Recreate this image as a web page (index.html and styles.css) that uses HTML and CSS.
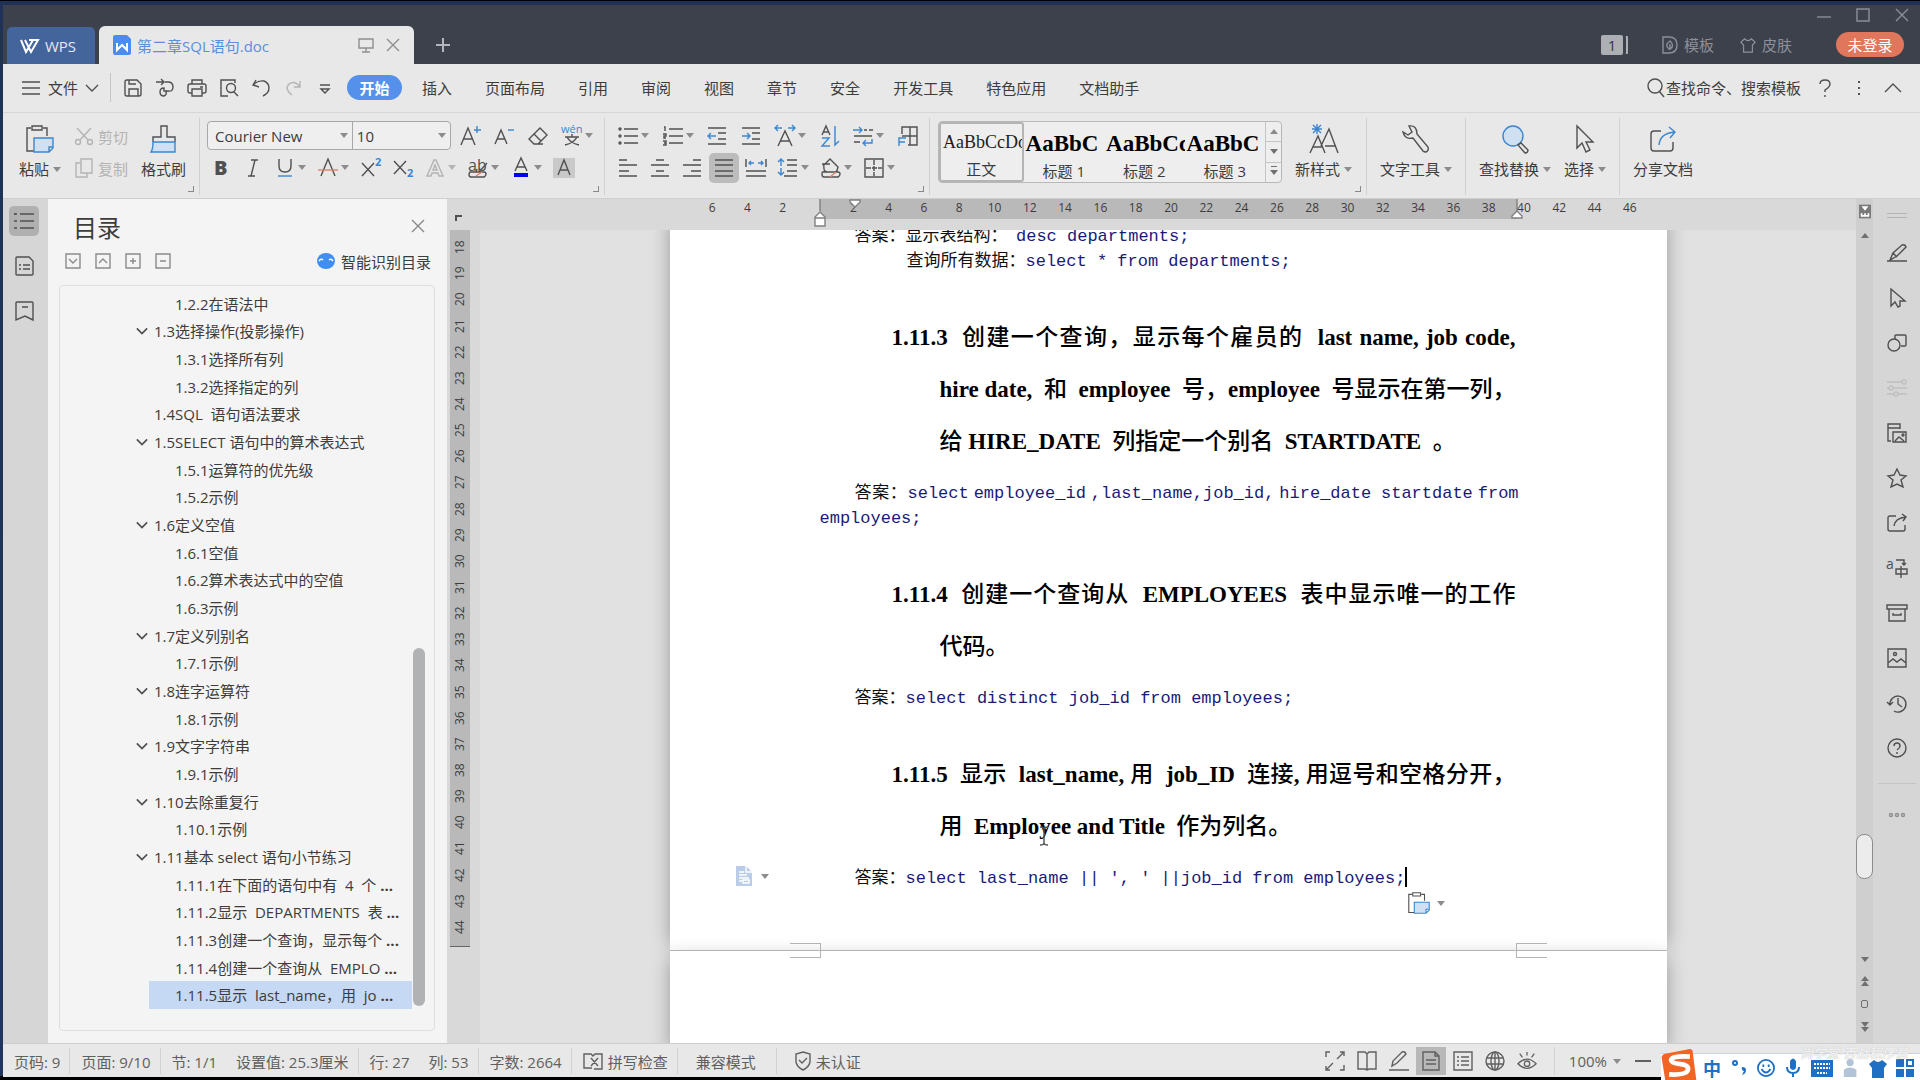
FILE: index.html
```html
<!DOCTYPE html>
<html lang="zh-CN">

<head>
  <meta charset="UTF-8">
  <meta name="viewport" content="width=device-width, initial-scale=1.0">
  <title>第二章SQL语句.doc</title>
  <link rel="stylesheet" href="styles.css">
</head>

<body>
  <!-- icon sprite -->
  <svg class="sprite" aria-hidden="true">
    <symbol id="i-close" viewBox="0 0 14 14"><path d="M1 1l12 12M13 1L1 13"/></symbol>
    <symbol id="i-down" viewBox="0 0 14 14"><path d="M1 4l6 6 6-6"/></symbol>
    <symbol id="i-up" viewBox="0 0 20 20"><path d="M2 14l8-8 8 8"/></symbol>
    <symbol id="i-menu" viewBox="0 0 20 20"><path d="M1 4h18M1 10h18M1 16h18"/></symbol>
    <symbol id="i-save" viewBox="0 0 20 20"><path d="M2 4q0-2 2-2h10l4 4v10q0 2-2 2H4q-2 0-2-2zM6 18v-7h9v7M6 2v4h7"/></symbol>
    <symbol id="i-export" viewBox="0 0 20 20"><path d="M1 4h8M6 1l3 3-3 3M10 4h3q5 0 5 5t-5 4H9v-3q-4 0-4 4t4 4q3-1 2-5"/></symbol>
    <symbol id="i-print" viewBox="0 0 20 20"><path d="M5 6V2h10v4M5 15H3q-2 0-2-2V8q0-2 2-2h14q2 0 2 2v5q0 2-2 2h-2M5 11h10v7H5zM13 9h3"/></symbol>
    <symbol id="i-preview" viewBox="0 0 20 20"><path d="M9 18H2V2h14v3"/><circle cx="12" cy="10" r="4.500"/><path d="M15 14l4 4"/></symbol>
    <symbol id="i-undo" viewBox="0 0 20 20"><path d="M5 2L2 7l6 2M2 7q5-5 11-4 5 2 5 7 0 5-6 8"/></symbol>
    <symbol id="i-redo" viewBox="0 0 20 20"><path d="M17 3v6h-6M17 9q-5-7-11-3-5 5 3 11"/></symbol>
    <symbol id="i-more" viewBox="0 0 20 20"><path d="M5 7h10M6 11l4 4 4-4z"/></symbol>
    <symbol id="i-search" viewBox="0 0 20 20"><circle cx="9" cy="8" r="7"/><path d="M13 13l5 6"/></symbol>
    <symbol id="i-dots" viewBox="0 0 20 20"><path d="M10 3v2M10 9v2M10 15v2"/></symbol>
    <symbol id="i-screen" viewBox="0 0 16 16"><path d="M1 2h14v9H1zM8 11v4M4 15h8"/></symbol>
    <symbol id="i-plus" viewBox="0 0 16 16"><path d="M8 1v14M1 8h14"/></symbol>
    <symbol id="i-leaf" viewBox="0 0 16 18"><path d="M1 1h6q8 0 8 8t-8 8H1zM7 13q-5-4 1-8 5 5 0 8zM8 8v6"/></symbol>
    <symbol id="i-shirt" viewBox="0 0 18 18"><path d="M5 2q4 4 8 0l4 4-3 3v8H4V9L1 6z"/></symbol>
    <symbol id="i-cut" viewBox="0 0 20 20"><path d="M3 2l11 12M17 2L6 14"/><circle cx="4" cy="16" r="2.500"/><circle cx="16" cy="16" r="2.500"/></symbol>
    <symbol id="i-copy" viewBox="0 0 20 20"><path d="M7 1h11v14H7zM7 5H2v14h11v-4"/></symbol>
    <symbol id="i-paste" viewBox="0 0 28 28"><path d="M5 3H1v23h7M17 3h4v8M6 1h10v4H6z"/><path class="blue fill" d="M8 13h19v10l-4 4H8zM27 22h-4v5"/></symbol>
    <symbol id="i-brush" viewBox="0 0 28 28"><path d="M3 17v-5h8V1h6v11h8v5"/><path class="blue fill" d="M3 17h22v10H1q2-3 2-10z"/></symbol>
    <symbol id="i-inc" viewBox="0 0 20 20"><path d="M1 19L8 2l7 17M4 13h8"/><path class="blue" d="M14 4h7M17 0v7"/></symbol>
    <symbol id="i-dec" viewBox="0 0 20 20"><path d="M1 18L7 4l6 14M3 13h8"/><path class="blue" d="M14 4h6"/></symbol>
    <symbol id="i-eraser" viewBox="0 0 20 20"><path d="M12 2l7 7-9 9H6l-5-5zM6 8l7 7M6 18h9"/></symbol>
    <symbol id="i-pinyin" viewBox="0 0 20 20"><text class="bt" x="-1" y="7" font-size="11">wén</text><path d="M3 11h14M10 8v3M5 11q3 6 12 8M15 11q-3 6-12 8"/></symbol>
    <symbol id="i-bold" viewBox="0 0 20 20"><text x="3" y="17" font-size="20" font-weight="800">B</text></symbol>
    <symbol id="i-italic" viewBox="0 0 20 20"><path d="M8 2h7M5 18h7M12 2L8 18"/></symbol>
    <symbol id="i-under" viewBox="0 0 20 20"><path d="M4 1v7q0 6 6 6t6-6V1"/><path class="blue" d="M3 18h14"/></symbol>
    <symbol id="i-strike" viewBox="0 0 20 20"><path d="M3 18l7-17 7 17"/><path class="red" d="M0 12h20"/></symbol>
    <symbol id="i-sup" viewBox="0 0 20 20"><path d="M1 5l12 13M13 5L1 18"/><text class="bt" x="14" y="8" font-size="11" font-weight="700">2</text></symbol>
    <symbol id="i-sub" viewBox="0 0 20 20"><path d="M1 3l12 13M13 3L1 16"/><text class="bt" x="14" y="19" font-size="11" font-weight="700">2</text></symbol>
    <symbol id="i-outline" viewBox="0 0 20 20"><path d="M2 18l7-16h2l7 16h-4l-1-3H7l-1 3zM8 12h4l-2-5z"/></symbol>
    <symbol id="i-mark" viewBox="0 0 20 20"><text x="0" y="13" font-size="16">ab</text><path d="M19 5l-8 9H8l1-3M2 14h14q2 0 2 2t-2 3H3q-2 0-2-3z"/><path class="red" d="M8 18l6-4"/></symbol>
    <symbol id="i-color" viewBox="0 0 20 20"><path d="M4 13L10 0l6 13M6 9h8"/><path class="ink" d="M3 17h14"/></symbol>
    <symbol id="i-shade" viewBox="0 0 20 20"><path class="shade" d="M-1 0h22v20H-1z"/><path d="M4 17l6-15 6 15M6 12h8"/></symbol>
    <symbol id="i-bullets" viewBox="0 0 20 20"><path d="M6 3h14M6 10h14M6 17h14"/><circle cx="2" cy="3" r="1"/><circle cx="2" cy="10" r="1"/><circle cx="2" cy="17" r="1"/></symbol>
    <symbol id="i-numbers" viewBox="0 0 20 20"><path d="M6 3h14M6 10h14M6 17h14M1 1h1v4M0 8h3v2H1v2h2M0 15h3v4H0M1 17h2"/></symbol>
    <symbol id="i-outdent" viewBox="0 0 20 20"><path d="M1 2h18M11 7h8M11 13h8M1 18h18"/><path class="blue" d="M1 10h8M4 7l-3 3 3 3"/></symbol>
    <symbol id="i-indent" viewBox="0 0 20 20"><path d="M1 2h18M11 7h8M11 13h8M1 18h18"/><path class="blue" d="M1 10h8M6 7l3 3-3 3"/></symbol>
    <symbol id="i-scale" viewBox="0 0 20 20"><path d="M3 20L10 5l7 15M5 15h10"/><path class="blue" d="M0 2h7M3-1L0 2l3 3M13 2h7M17-1l3 3-3 3"/></symbol>
    <symbol id="i-sort" viewBox="0 0 20 20"><path d="M2 9l4-9 4 9M3 6h6"/><path class="blue" d="M2 12h7l-7 8h8M15 0v19l4-4"/></symbol>
    <symbol id="i-marks" viewBox="0 0 20 20"><path d="M11 4h3M16 4h4M1 10h18M1 16h6"/><path class="blue" d="M0 4h9M6 1l3 3-3 3M19 13v4h-9M13 14l-3 3 3 3"/></symbol>
    <symbol id="i-tabs" viewBox="0 0 20 20"><path d="M4 8V1h15v18h-9M12 1v18M4 10h15"/><path class="blue" d="M1 20v-8h7M1 16h6"/></symbol>
    <symbol id="i-left" viewBox="0 0 20 20"><path d="M1 2h8M1 7h18M1 13h10M1 18h18"/></symbol>
    <symbol id="i-center" viewBox="0 0 20 20"><path d="M6 2h8M1 7h18M6 13h8M1 18h18"/></symbol>
    <symbol id="i-right" viewBox="0 0 20 20"><path d="M11 2h8M1 7h18M9 13h10M1 18h18"/></symbol>
    <symbol id="i-justify" viewBox="0 0 20 20"><path d="M1 2h18M1 7h18M1 13h18M1 18h18"/></symbol>
    <symbol id="i-spread" viewBox="0 0 20 20"><path d="M0 1v8M20 1v8M0 13h20M0 18h20"/><path class="blue" d="M3 5h5M5 3L3 5l2 2M12 5h5M15 3l2 2-2 2"/></symbol>
    <symbol id="i-lines" viewBox="0 0 20 20"><path d="M9 2h10M9 7h10M9 13h10M6 18h13"/><path class="blue" d="M3 1v7M0 4l3-3 3 3M3 10v7M0 14l3 3 3-3"/></symbol>
    <symbol id="i-fill" viewBox="0 0 20 20"><path d="M2 8l7-7 8 8q-1 5-3 5H6Q2 13 3 8M1 6h8M3 14h14q2 0 2 2t-2 3H3q-2 0-2-3t2-2z"/><path class="red" d="M9 19l6-5"/></symbol>
    <symbol id="i-border" viewBox="0 0 20 20"><path d="M1 1h18v18H1z"/><path d="M10 2v16M2 10h16" stroke-dasharray="5 1"/></symbol>
    <symbol id="i-style" viewBox="0 0 30 30"><path d="M1 29l8-17 7 17M4 23h9M12 22L20 5l9 24M16 22h11"/><path class="blue" d="M8 0v10M3 5h10M4 1l8 8M12 1L4 9"/></symbol>
    <symbol id="i-wrench" viewBox="0 0 28 28"><path d="M7 1q8-1 8 8l11 13q1 4-2 5-2 0-3-1L11 13Q3 15 1 7l5 3 4-3z"/></symbol>
    <symbol id="i-find" viewBox="0 0 28 28"><circle class="blue fill" cx="12" cy="11" r="10"/><path d="M17 20l3-2 7 7q0 3-3 3z"/></symbol>
    <symbol id="i-pick" viewBox="0 0 28 28"><path d="M6 1v22l5-5 4 9 4-2-4-8h7z"/></symbol>
    <symbol id="i-share" viewBox="0 0 28 28"><path d="M12 6H5q-3 0-3 3v14q0 3 3 3h16q3 0 3-3v-6"/><path class="blue" d="M10 20q1-12 16-13M20 2l6 5-5 6"/></symbol>
    <symbol id="i-toc" viewBox="0 0 20 20"><path d="M6 3h14M6 10h14M6 17h14M0 3h3M1 2v2M0 10h3M0 17h3"/></symbol>
    <symbol id="i-page" viewBox="0 0 20 20"><path d="M2 2q0-1 1-1h12l4 4v13q0 1-1 1H3q-1 0-1-1zM5 9h2M9 9h7M5 13h2M9 13h7"/></symbol>
    <symbol id="i-mark2" viewBox="0 0 20 20"><path d="M2 2q0-1 1-1h15q1 0 1 1v17l-8-4-9 4zM8 6h6"/></symbol>
    <symbol id="i-boxdown" viewBox="0 0 16 16"><path d="M1 1h14v14H1zM4 6l4 4 4-4"/></symbol>
    <symbol id="i-boxup" viewBox="0 0 16 16"><path d="M1 1h14v14H1zM4 10l4-4 4 4"/></symbol>
    <symbol id="i-boxplus" viewBox="0 0 16 16"><path d="M1 1h14v14H1zM5 8h6M8 5v6"/></symbol>
    <symbol id="i-boxminus" viewBox="0 0 16 16"><path d="M1 1h14v14H1zM5 8h6"/></symbol>
    <symbol id="i-pen" viewBox="0 0 20 20"><path d="M0 18h20M3 17l3-7 9-8q3-1 4 2l-9 9zM6 10l4 4"/></symbol>
    <symbol id="i-cursor" viewBox="0 0 20 20"><path d="M4 1v17l4-4 3 5 2-1v-5h5z"/></symbol>
    <symbol id="i-shapes" viewBox="0 0 20 20"><path d="M8 6V3q0-1 1-1h9q1 0 1 1v9q0 1-1 1h-4"/><circle cx="7" cy="12" r="6"/></symbol>
    <symbol id="i-sliders" viewBox="0 0 20 20"><path d="M0 4h15M0 10h2M6 10h14M0 16h7M11 16h9"/><circle cx="17" cy="4" r="2"/><circle cx="4" cy="10" r="2"/><circle cx="9" cy="16" r="2"/></symbol>
    <symbol id="i-gallery" viewBox="0 0 20 20"><path d="M4 18H1V1h12v5M1 5h12M6 9h13v10H6zM8 18l4-4 5 4"/><circle cx="16" cy="12" r="1"/></symbol>
    <symbol id="i-star" viewBox="0 0 20 20"><path d="M10 1l3 6 6 1-5 4 2 7-6-3-6 3 2-7-5-4 6-1z"/></symbol>
    <symbol id="i-send" viewBox="0 0 20 20"><path d="M9 3H3q-2 0-2 2v11q0 2 2 2h13q2 0 2-2v-4M7 13q1-8 12-9M15 1l4 3-3 4"/></symbol>
    <symbol id="i-trans" viewBox="0 0 20 20"><text x="-1" y="11" font-size="14">a</text><path d="M9 2h8v4M15 5l2 2 2-2M9 11h11v5H9zM14 8v12"/></symbol>
    <symbol id="i-archive" viewBox="0 0 20 20"><path d="M0 2h20v4H0zM2 6v12h16V6M6 10v2h8v-2"/></symbol>
    <symbol id="i-image" viewBox="0 0 20 20"><path d="M1 1h18v18H1zM1 15l5-4 4 3 4-3 5 4"/><circle cx="8" cy="6" r="1.500"/></symbol>
    <symbol id="i-history" viewBox="0 0 20 20"><path d="M3 12a8 8 0 1 1 4 6M0 9l3 3 3-3M11 5v6l4 3"/></symbol>
    <symbol id="i-help" viewBox="0 0 20 20"><circle cx="10" cy="10" r="9"/><path d="M7 8q0-3 3-3t3 3q0 2-3 4M10 14v2"/></symbol>
    <symbol id="i-ask" viewBox="0 0 20 20"><path d="M5 6q0-4 5-4t5 4q0 3-5 6v2M10 17v2"/></symbol>
    <symbol id="i-ellipsis" viewBox="0 0 20 20"><circle cx="4" cy="10" r="1.500"/><circle cx="10" cy="10" r="1.500"/><circle cx="16" cy="10" r="1.500"/></symbol>
    <symbol id="i-spell" viewBox="0 0 20 20"><path d="M9 17H1V3h7l2 2 2-2h7v15h-8M8 7l7 8M15 7l-7 8"/></symbol>
    <symbol id="i-shield" viewBox="0 0 16 20"><path d="M8 1l7 2v8q-1 5-7 8-6-3-7-8V3zM4 9l3 3 5-5"/></symbol>
    <symbol id="i-full" viewBox="0 0 20 20"><path d="M1 6V1h4M15 1h4v4M19 14v5h-4M5 19H1v-4M12 8l6-6M8 12l-6 6"/></symbol>
    <symbol id="i-book" viewBox="0 0 20 20"><path d="M10 3L8 1H1v17h7l2 1 2-1h7V1h-7zM10 3v16"/></symbol>
    <symbol id="i-write" viewBox="0 0 20 20"><path d="M0 19h20M3 15l1-5 9-9q3-1 4 2l-9 9z"/></symbol>
    <symbol id="i-doc" viewBox="0 0 20 20"><path d="M2 1h12l4 4v14H2zM5 9h10M5 13h10M14 1v4h4"/></symbol>
    <symbol id="i-list" viewBox="0 0 20 20"><path d="M1 1h18v18H1zM4 6h2M8 6h8M4 10h2M8 10h8M4 14h2M8 14h8"/></symbol>
    <symbol id="i-globe" viewBox="0 0 20 20"><circle cx="10" cy="10" r="9"/><ellipse cx="10" cy="10" rx="4" ry="9"/><path d="M10 1v18M2 7h16M2 13h16"/></symbol>
    <symbol id="i-eye" viewBox="0 0 22 20"><path d="M1 13q10-10 20 0-10 10-20 0zM11 0v4M3 2l3 4M19 2l-3 4"/><circle cx="11" cy="13" r="3"/></symbol>
  </svg>

  <div class="window">
    <header class="titlebar">
      <button class="tab-home"><svg viewBox="0 0 20 16"><path d="M1 2l5 12L13 2M5 2l6 12 7-12H9"/></svg>WPS</button>
      <div class="tab-doc">
        <svg class="doc-logo" viewBox="0 0 18 20"><path class="logo-bg" d="M2 0h12l4 4v14q0 2-2 2H2q-2 0-2-2V2q0-2 2-2z"/><path class="logo-w" d="M4 8v7l5-5 5 5V8"/></svg>
        <span class="tab-name">第二章SQL语句.doc</span>
        <svg class="s16"><use href="#i-screen"/></svg>
        <button aria-label="关闭标签"><svg class="s14"><use href="#i-close"/></svg></button>
      </div>
      <button class="tab-new" aria-label="新建"><svg class="s16"><use href="#i-plus"/></svg></button>
      <div class="title-right">
        <div class="win-buttons">
          <button aria-label="最小化"><svg class="s14" viewBox="0 0 14 14"><path d="M0 9h14"/></svg></button>
          <button aria-label="最大化"><svg class="s14" viewBox="0 0 14 14"><path d="M1 1h12v12H1z"/></svg></button>
          <button aria-label="关闭"><svg class="s14"><use href="#i-close"/></svg></button>
        </div>
        <div class="account">
          <span class="badge">1</span>
          <a href="#"><svg viewBox="0 0 16 18"><use href="#i-leaf"/></svg>模板</a>
          <a href="#"><svg viewBox="0 0 18 18"><use href="#i-shirt"/></svg>皮肤</a>
          <button class="login">未登录</button>
        </div>
      </div>
    </header>

    <nav class="menubar">
      <button class="file"><svg class="s20"><use href="#i-menu"/></svg>文件<svg class="s14"><use href="#i-down"/></svg></button>
      <div class="quick">
        <button aria-label="保存"><svg class="s20"><use href="#i-save"/></svg></button>
        <button aria-label="输出"><svg class="s20"><use href="#i-export"/></svg></button>
        <button aria-label="打印"><svg class="s20"><use href="#i-print"/></svg></button>
        <button aria-label="打印预览"><svg class="s20"><use href="#i-preview"/></svg></button>
        <button aria-label="撤销"><svg class="s20"><use href="#i-undo"/></svg></button>
        <button aria-label="恢复" class="off"><svg class="s20"><use href="#i-redo"/></svg></button>
        <button aria-label="更多"><svg class="s20"><use href="#i-more"/></svg></button>
      </div>
      <div class="menus">
        <button class="active">开始</button>
        <button>插入</button>
        <button>页面布局</button>
        <button>引用</button>
        <button>审阅</button>
        <button>视图</button>
        <button>章节</button>
        <button>安全</button>
        <button>开发工具</button>
        <button>特色应用</button>
        <button>文档助手</button>
      </div>
      <div class="menu-right">
        <button class="find"><svg class="s20"><use href="#i-search"/></svg>查找命令、搜索模板</button>
        <button aria-label="帮助"><svg class="s20"><use href="#i-ask"/></svg></button>
        <button aria-label="选项"><svg class="s20 bolder"><use href="#i-dots"/></svg></button>
        <button aria-label="折叠"><svg class="s20"><use href="#i-up"/></svg></button>
      </div>
    </nav>

    <div class="ribbon">
      <section class="group clipboard">
        <button class="big"><svg class="s28"><use href="#i-paste"/></svg><span>粘贴<i class="caret"></i></span></button>
        <div class="rows">
          <button class="off"><svg class="s20"><use href="#i-cut"/></svg>剪切</button>
          <button class="off"><svg class="s20"><use href="#i-copy"/></svg>复制</button>
        </div>
        <button class="big"><svg class="s28"><use href="#i-brush"/></svg><span>格式刷</span></button>
        <i class="corner"></i>
      </section>

      <section class="group font">
        <div class="row top">
          <div class="combos">
            <label class="combo name"><select aria-label="字体"><option>Courier New</option></select><i class="caret"></i></label>
            <label class="combo size"><select aria-label="字号"><option>10</option></select><i class="caret"></i></label>
          </div>
          <button aria-label="增大字号"><svg class="s20"><use href="#i-inc"/></svg></button>
          <button aria-label="减小字号"><svg class="s20"><use href="#i-dec"/></svg></button>
          <button aria-label="清除格式"><svg class="s20"><use href="#i-eraser"/></svg></button>
          <button aria-label="拼音指南"><svg class="s20"><use href="#i-pinyin"/></svg><i class="caret"></i></button>
        </div>
        <div class="row bottom">
          <button aria-label="加粗"><svg class="s20"><use href="#i-bold"/></svg></button>
          <button aria-label="倾斜"><svg class="s20"><use href="#i-italic"/></svg></button>
          <button aria-label="下划线"><svg class="s20"><use href="#i-under"/></svg><i class="caret"></i></button>
          <button aria-label="删除线"><svg class="s20"><use href="#i-strike"/></svg><i class="caret"></i></button>
          <button aria-label="上标"><svg class="s20"><use href="#i-sup"/></svg></button>
          <button aria-label="下标"><svg class="s20"><use href="#i-sub"/></svg></button>
          <button aria-label="文字效果" class="off"><svg class="s20"><use href="#i-outline"/></svg><i class="caret"></i></button>
          <button aria-label="突出显示"><svg class="s20"><use href="#i-mark"/></svg><i class="caret"></i></button>
          <button aria-label="字体颜色"><svg class="s20"><use href="#i-color"/></svg><i class="caret"></i></button>
          <button aria-label="字符底纹"><svg class="s20"><use href="#i-shade"/></svg></button>
        </div>
        <i class="corner"></i>
      </section>

      <section class="group para">
        <div class="row spread">
          <button aria-label="项目符号"><svg class="s20"><use href="#i-bullets"/></svg><i class="caret"></i></button>
          <button aria-label="编号"><svg class="s20"><use href="#i-numbers"/></svg><i class="caret"></i></button>
          <button aria-label="减少缩进"><svg class="s20"><use href="#i-outdent"/></svg></button>
          <button aria-label="增加缩进"><svg class="s20"><use href="#i-indent"/></svg></button>
          <button aria-label="中文版式"><svg class="s20"><use href="#i-scale"/></svg><i class="caret"></i></button>
          <button aria-label="排序"><svg class="s20"><use href="#i-sort"/></svg></button>
          <button aria-label="编辑标记"><svg class="s20"><use href="#i-marks"/></svg><i class="caret"></i></button>
          <button aria-label="制表位"><svg class="s20"><use href="#i-tabs"/></svg></button>
        </div>
        <div class="row bottom">
          <button aria-label="左对齐"><svg class="s20"><use href="#i-left"/></svg></button>
          <button aria-label="居中"><svg class="s20"><use href="#i-center"/></svg></button>
          <button aria-label="右对齐"><svg class="s20"><use href="#i-right"/></svg></button>
          <button aria-label="两端对齐" class="on"><svg class="s20"><use href="#i-justify"/></svg></button>
          <button aria-label="分散对齐"><svg class="s20"><use href="#i-spread"/></svg></button>
          <button aria-label="行距"><svg class="s20"><use href="#i-lines"/></svg><i class="caret"></i></button>
          <button aria-label="底纹颜色"><svg class="s20"><use href="#i-fill"/></svg><i class="caret"></i></button>
          <button aria-label="边框"><svg class="s20"><use href="#i-border"/></svg><i class="caret"></i></button>
        </div>
        <i class="corner"></i>
      </section>

      <section class="group styles">
        <div class="gallery">
          <button class="style current"><span class="sample">AaBbCcDd</span><span>正文</span></button>
          <button class="style"><span class="sample head">AaBbC</span><span>标题 1</span></button>
          <button class="style"><span class="sample head">AaBbCc</span><span>标题 2</span></button>
          <button class="style"><span class="sample head">AaBbC</span><span>标题 3</span></button>
          <div class="scroller">
            <button aria-label="上一行"><i class="caret flip"></i></button>
            <button aria-label="下一行"><i class="caret dark"></i></button>
            <button aria-label="展开"><i class="caret dark bar"></i></button>
          </div>
        </div>
        <button class="big"><svg class="s30"><use href="#i-style"/></svg><span>新样式<i class="caret"></i></span></button>
        <i class="corner"></i>
      </section>

      <section class="group">
        <button class="big"><svg class="s28"><use href="#i-wrench"/></svg><span>文字工具<i class="caret"></i></span></button>
      </section>
      <section class="group">
        <button class="big"><svg class="s28"><use href="#i-find"/></svg><span>查找替换<i class="caret"></i></span></button>
        <button class="big"><svg class="s28"><use href="#i-pick"/></svg><span>选择<i class="caret"></i></span></button>
      </section>
      <section class="group last">
        <button class="big"><svg class="s28"><use href="#i-share"/></svg><span>分享文档</span></button>
      </section>
    </div>

    <main class="workspace">
      <aside class="rail left">
        <button class="on" aria-label="目录"><svg class="s20"><use href="#i-toc"/></svg></button>
        <button aria-label="章节"><svg class="s20"><use href="#i-page"/></svg></button>
        <button aria-label="书签"><svg class="s20"><use href="#i-mark2"/></svg></button>
      </aside>

      <aside class="outline">
        <div class="outline-head">
          <h2>目录</h2>
          <button aria-label="关闭目录"><svg class="s14"><use href="#i-close"/></svg></button>
        </div>
        <div class="outline-tools">
          <button aria-label="展开"><svg class="s16"><use href="#i-boxdown"/></svg></button>
          <button aria-label="收起"><svg class="s16"><use href="#i-boxup"/></svg></button>
          <button aria-label="增加级别"><svg class="s16"><use href="#i-boxplus"/></svg></button>
          <button aria-label="减少级别"><svg class="s16"><use href="#i-boxminus"/></svg></button>
          <button class="smart"><svg viewBox="0 0 18 16"><ellipse cx="9" cy="8" rx="9" ry="8"/><path d="M2 8q2-3 4-1M12 7q2-2 4 1"/></svg>智能识别目录</button>
        </div>
        <div class="tree">
          <ul>
            <li class="sub"><a href="#">1.2.2在语法中</a></li>
            <li><svg class="s14"><use href="#i-down"/></svg><a href="#">1.3选择操作(投影操作)</a></li>
            <li class="sub"><a href="#">1.3.1选择所有列</a></li>
            <li class="sub"><a href="#">1.3.2选择指定的列</a></li>
            <li class="leaf"><a href="#">1.4SQL&nbsp; 语句语法要求</a></li>
            <li><svg class="s14"><use href="#i-down"/></svg><a href="#">1.5SELECT 语句中的算术表达式</a></li>
            <li class="sub"><a href="#">1.5.1运算符的优先级</a></li>
            <li class="sub"><a href="#">1.5.2示例</a></li>
            <li><svg class="s14"><use href="#i-down"/></svg><a href="#">1.6定义空值</a></li>
            <li class="sub"><a href="#">1.6.1空值</a></li>
            <li class="sub"><a href="#">1.6.2算术表达式中的空值</a></li>
            <li class="sub"><a href="#">1.6.3示例</a></li>
            <li><svg class="s14"><use href="#i-down"/></svg><a href="#">1.7定义列别名</a></li>
            <li class="sub"><a href="#">1.7.1示例</a></li>
            <li><svg class="s14"><use href="#i-down"/></svg><a href="#">1.8连字运算符</a></li>
            <li class="sub"><a href="#">1.8.1示例</a></li>
            <li><svg class="s14"><use href="#i-down"/></svg><a href="#">1.9文字字符串</a></li>
            <li class="sub"><a href="#">1.9.1示例</a></li>
            <li><svg class="s14"><use href="#i-down"/></svg><a href="#">1.10去除重复行</a></li>
            <li class="sub"><a href="#">1.10.1示例</a></li>
            <li><svg class="s14"><use href="#i-down"/></svg><a href="#">1.11基本 select 语句小节练习</a></li>
            <li class="sub"><a href="#">1.11.1在下面的语句中有&nbsp; 4&nbsp; 个 <b>...</b></a></li>
            <li class="sub"><a href="#">1.11.2显示&nbsp; DEPARTMENTS&nbsp; 表 <b>...</b></a></li>
            <li class="sub"><a href="#">1.11.3创建一个查询，显示每个 <b>...</b></a></li>
            <li class="sub"><a href="#">1.11.4创建一个查询从&nbsp; EMPLO <b>...</b></a></li>
            <li class="sub here"><a href="#">1.11.5显示&nbsp; last_name，用&nbsp; jo <b>...</b></a></li>
          </ul>
          <div class="tree-scroll"><i></i></div>
        </div>
      </aside>

      <div class="vruler">
        <svg class="s14" viewBox="0 0 14 14"><path d="M4 10V5h6"/></svg>
        <div class="vruler-scale">
          <span>44</span><span>43</span><span>42</span><span>41</span><span>40</span><span>39</span><span>38</span><span>37</span><span>36</span><span>35</span><span>34</span><span>33</span><span>32</span><span>31</span><span>30</span><span>29</span><span>28</span><span>27</span><span>26</span><span>25</span><span>24</span><span>23</span><span>22</span><span>21</span><span>20</span><span>19</span><span>18</span>
        </div>
      </div>

      <div class="editor">
        <div class="hruler">
          <div class="hruler-scale">
            <span>6</span><span>4</span><span>2</span><span></span><span>2</span><span>4</span><span>6</span><span>8</span><span>10</span><span>12</span><span>14</span><span>16</span><span>18</span><span>20</span><span>22</span><span>24</span><span>26</span><span>28</span><span>30</span><span>32</span><span>34</span><span>36</span><span>38</span><span>40</span><span>42</span><span>44</span><span>46</span>
            <svg class="stop hang" viewBox="0 0 12 28"><path class="line" d="M6 0v12"/><path d="M1 18l5-5 5 5v9H1zM1 19h10"/></svg>
            <svg class="stop first" viewBox="0 0 12 28"><path d="M1 1h10v2L6 8 1 3z"/></svg>
            <svg class="stop end" viewBox="0 0 12 28"><path class="line" d="M6 0v12"/><path d="M1 19v-2l5-5 5 5v2z"/></svg>
          </div>
        </div>
        <div class="canvas">
          <article class="page">
            <p>答案：显示表结构：&nbsp; <code>desc departments;</code></p>
            <p class="deep">查询所有数据：<code>select * from departments;</code></p>

            <h3><b>1.11.3&nbsp; </b>创建一个查询，显示每个雇员的<b>&nbsp; last name, job code, hire date,&nbsp; </b>和<b>&nbsp; employee&nbsp; </b>号，<b>employee&nbsp; </b>号显示在第一列，给<b> HIRE_DATE&nbsp; </b>列指定一个别名<b>&nbsp; STARTDATE&nbsp; </b>。</h3>
            <p>答案：<code>select</code> <code>employee_id</code> <code>,last_name,job_id,</code> <code>hire_date</code>&nbsp; <code>startdate</code> <code>from</code> <code>employees;</code></p>

            <h3><b>1.11.4&nbsp; </b>创建一个查询从<b>&nbsp; EMPLOYEES&nbsp; </b>表中显示唯一的工作代码。</h3>
            <p>答案：<code>select distinct job_id from employees;</code></p>

            <h3><b>1.11.5&nbsp; </b>显示<b>&nbsp; last_name, </b>用<b>&nbsp; job_ID&nbsp; </b>连接<b>, </b>用逗号和空格分开，用<b>&nbsp; Employee and Title&nbsp; </b>作为列名。</h3>
            <p class="typing">答案：<code>select last_name || ', ' ||job_id from employees;</code><span class="cursor"><button class="paste-tip" aria-label="粘贴选项"><svg class="s22" viewBox="0 0 28 28"><use href="#i-paste"/></svg><i class="caret"></i></button></span>
              <button class="para-tip" aria-label="段落布局"><svg viewBox="0 0 16 20"><path class="tip-bg" d="M0 0h10l6 6v14H0z"/><path d="M10 0v6h6M3 6h5M3 9h8M3 12h10M3 15h4v-1h6v3H7v-1"/></svg><i class="caret"></i></button>
            </p>
            <svg class="ibeam" viewBox="0 0 10 20"><path d="M1 1q4 0 4 2 0-2 4-2M5 3v14M1 19q4 0 4-2 0 2 4 2"/></svg>
          </article>
          <div class="page next"><i class="crop l"></i><i class="crop r"></i></div>
        </div>
      </div>

      <div class="vscroll">
        <svg class="ruler-toggle" viewBox="0 0 14 16"><path class="box" d="M0 0h14v16H0z"/><path class="tri" d="M3 2h8L7 7zM2 10h2v2h2v-2h2v2h2v-2h2v4H2z"/></svg>
        <i class="caret flip dark"></i>
        <i class="thumb"></i>
        <i class="caret dark"></i>
        <span><i class="caret flip dark"></i><i class="caret flip dark"></i></span>
        <i class="ring"></i>
        <span><i class="caret dark"></i><i class="caret dark"></i></span>
      </div>

      <aside class="rail right">
        <i class="grip"></i>
        <button aria-label="画笔"><svg class="s20"><use href="#i-pen"/></svg></button>
        <button aria-label="选择"><svg class="s20"><use href="#i-cursor"/></svg></button>
        <button aria-label="形状"><svg class="s20"><use href="#i-shapes"/></svg></button>
        <button aria-label="属性" class="off"><svg class="s20"><use href="#i-sliders"/></svg></button>
        <button aria-label="图库"><svg class="s20"><use href="#i-gallery"/></svg></button>
        <button aria-label="收藏"><svg class="s20"><use href="#i-star"/></svg></button>
        <button aria-label="分享"><svg class="s20"><use href="#i-send"/></svg></button>
        <button aria-label="翻译"><svg class="s20"><use href="#i-trans"/></svg></button>
        <button aria-label="备份"><svg class="s20"><use href="#i-archive"/></svg></button>
        <button aria-label="图片"><svg class="s20"><use href="#i-image"/></svg></button>
        <button aria-label="历史"><svg class="s20"><use href="#i-history"/></svg></button>
        <button aria-label="帮助"><svg class="s20"><use href="#i-help"/></svg></button>
        <hr>
        <button aria-label="更多" class="soft"><svg class="s20"><use href="#i-ellipsis"/></svg></button>
      </aside>
    </main>

    <footer class="status">
      <span>页码: 9</span>
      <span>页面: 9/10</span>
      <span>节: 1/1<em>设置值: 25.3厘米</em></span>
      <span>行: 27<em>列: 53</em></span>
      <span>字数: 2664</span>
      <button><svg class="s20"><use href="#i-spell"/></svg>拼写检查</button>
      <span class="wide">兼容模式</span>
      <button class="wide"><svg class="shield" viewBox="0 0 16 20"><use href="#i-shield"/></svg>未认证</button>
      <div class="views">
        <button aria-label="全屏"><svg class="s20"><use href="#i-full"/></svg></button>
        <button aria-label="阅读"><svg class="s20"><use href="#i-book"/></svg></button>
        <button aria-label="写作"><svg class="s20"><use href="#i-write"/></svg></button>
        <button aria-label="页面视图" class="on"><svg class="s20"><use href="#i-doc"/></svg></button>
        <button aria-label="大纲"><svg class="s20"><use href="#i-list"/></svg></button>
        <button aria-label="网页"><svg class="s20"><use href="#i-globe"/></svg></button>
        <button aria-label="护眼"><svg class="s20"><use href="#i-eye"/></svg></button>
      </div>
      <div class="zoom">
        <button>100%<i class="caret"></i></button>
        <button aria-label="缩小"><svg class="s16 bolder" viewBox="0 0 16 16"><path d="M0 8h16"/></svg></button>
      </div>
    </footer>
  </div>

  <!-- floating input method bar -->
  <div class="ime">
    <svg class="ime-logo" viewBox="0 0 38 34"><path class="o" d="M4 5l26-5q3 0 3 3l4 31H4L0 9q0-3 4-4z"/><path class="s" d="M30 8q-20-1-20 4 0 3 10 4 9 1 8 6-1 6-20 5"/></svg>
    <span class="zh">中</span>
    <svg viewBox="0 0 16 20"><circle class="thin" cx="4" cy="5" r="2"/><path class="solid" d="M11 9q4 0 4 3 0 4-4 5l2-4q-3-1-2-4z"/></svg>
    <svg viewBox="0 0 20 20"><circle cx="10" cy="10" r="9"/><path d="M5 11q5 8 10 0M7 6v3M13 6v3"/></svg>
    <svg viewBox="0 0 16 20"><path class="solid" d="M5 3q3-5 6 0v7q-3 4-6 0z"/><path d="M2 9q0 6 6 6t6-6M8 15v4"/></svg>
    <svg class="w22" viewBox="0 0 22 18"><path class="solid" d="M0 1h22v17H0z"/><path class="keys" d="M3 5h16M3 9h16M6 14h10" stroke-dasharray="2 1"/></svg>
    <svg class="pale" viewBox="0 0 20 20"><circle class="solid" cx="9" cy="4" r="4"/><path class="solid" d="M2 20v-8q7-5 14 0v8z"/></svg>
    <svg viewBox="0 0 18 20"><path class="solid" d="M5 2q4 4 8 0l5 4-3 4v10H3V10L0 6z"/></svg>
    <svg viewBox="0 0 18 20"><path class="solid" d="M0 1h8v8H0zM0 11h8v8H0zM10 11h8v8h-8z"/><path d="M11 2h6v6h-6z"/></svg>
    <span class="watermark">尚学堂·百战程序员</span>
  </div>
</body>

</html>
```
FILE: styles.css
```css
* {
  margin: 0;
  padding: 0;
  box-sizing: border-box;
}

body {
  height: 100vh;
  padding: 4px 0 3px 3px;
  border-top: 1px solid black;
  background: linear-gradient(#1f3157 0, #22355c 1076px, black 1076px);
  color: #3c3c3c;
  font-family: "Open Sans", "Noto Sans CJK SC", sans-serif;
  font-size: 15px;
  overflow: hidden;
}

.sprite {
  display: none;
}

button, select {
  border: none;
  background: none;
  color: inherit;
  font: inherit;
}

button {
  display: flex;
  align-items: center;
  justify-content: center;
  white-space: nowrap;
}

a {
  color: inherit;
  text-decoration: none;
}

svg {
  flex: none;
  fill: none;
  stroke: #505050;
  stroke-width: 1.4;
  overflow: visible;
}

symbol {
  overflow: visible;
}

svg text {
  fill: #505050;
  stroke: none;
  font-family: "Open Sans", sans-serif;
}

svg .blue { stroke: #3c86d0; }
svg .red { stroke: #e0826c; }
svg .fill { fill: #cfe0f2; }
svg .bt { fill: #3c86d0; }
svg .ink { stroke: #0000f0; stroke-width: 4; }
svg .shade { fill: #c9c9c9; stroke: none; }

.s14 { width: 14px; height: 14px; }
.s16 { width: 16px; height: 16px; }
.s20 { width: 20px; height: 20px; }
.s22 { width: 22px; height: 22px; }
.s28 { width: 28px; height: 28px; }
.s30 { width: 30px; height: 30px; }
.bolder { stroke-width: 2; }

.off {
  color: #b4b4b4;
}

.off svg {
  stroke: #b4b4b4;
}

.soft svg {
  stroke: #909090;
}

.caret {
  flex: none;
  border: 4px solid transparent;
  border-top: 5px solid #8c8c8c;
  border-bottom: none;
}

.off .caret { border-top-color: #b4b4b4; }
.caret.dark { border-top-color: #707070; }
.caret.flip { transform: rotate(180deg); }

.window {
  display: grid;
  grid-template-rows: 59px 49px 86px 1fr 34px;
  height: 100%;
}

/* title bar */
.titlebar {
  display: flex;
  align-items: flex-end;
  background: #3d414c;
  padding-left: 4px;
  min-width: 0;
}

.tab-home {
  width: 88px;
  height: 37px;
  margin-right: 4px;
  gap: 5px;
  padding-right: 6px;
  background: #43659c;
  border-radius: 5px 5px 0 0;
  color: #e4e8f0;
}

.tab-home svg {
  width: 20px;
  height: 16px;
  stroke: white;
  stroke-width: 2;
}

.tab-doc {
  display: flex;
  align-items: center;
  width: 315px;
  height: 38px;
  padding: 0 14px;
  background: #e8e8e8;
  border-radius: 6px 6px 0 0;
  color: #5b8fdc;
}

.doc-logo {
  width: 18px;
  height: 20px;
  margin-right: 6px;
}

.logo-bg { fill: #4a8df0; stroke: none; }
.logo-w { stroke: white; stroke-width: 2; }

.tab-name {
  flex: 1;
}

.tab-doc > .s16 {
  margin-right: 12px;
  stroke: #8e8e8e;
}

.tab-doc button svg {
  stroke: #8e8e8e;
}

.tab-new {
  width: 58px;
  height: 38px;
}

.tab-new svg {
  stroke: #b4b6bc;
  stroke-width: 2;
}

.title-right {
  display: flex;
  flex-direction: column;
  align-items: flex-end;
  gap: 10px;
  margin-left: auto;
  padding: 0 11px 7px 0;
  color: #8b8f99;
}

.title-right svg {
  stroke: #8b8f99;
}

.win-buttons {
  display: flex;
  gap: 25px;
}

.account {
  display: flex;
  align-items: center;
  padding-right: 5px;
}

.badge {
  width: 22px;
  height: 20px;
  background: #adafb3;
  color: #33363d;
  line-height: 20px;
  text-align: center;
  border-radius: 2px;
  box-shadow: 4px 0 0 -1px #3d414c, 6px 0 0 -1px #adafb3;
  margin-right: 39px;
}

.account a {
  display: flex;
  align-items: center;
  gap: 6px;
  margin-right: 26px;
}

.account a svg {
  width: 16px;
  height: 18px;
}

.login {
  width: 68px;
  height: 25px;
  margin-left: 18px;
  border-radius: 13px;
  background: #e0765b;
  color: white;
}

/* menu row */
.menubar {
  display: flex;
  align-items: center;
  background: #e8e8e8;
  border-bottom: 1px solid #d6d6d6;
  padding: 0 17px 1px 18px;
  min-width: 0;
}

.file {
  gap: 7px;
  height: 29px;
  padding-right: 11px;
  border-right: 1px solid #c4c4c4;
}

.quick {
  display: flex;
  gap: 12px;
  padding: 0 12px;
}

.menus {
  display: flex;
  align-items: center;
}

.menus button {
  padding: 0 16px;
  margin-right: 1px;
  height: 25px;
}

.menus .active {
  width: 55px;
  padding: 0;
  margin-right: 4px;
  border-radius: 13px;
  background: #5590ea;
  color: white;
  font-weight: 700;
}

.menu-right {
  display: flex;
  align-items: center;
  gap: 14px;
  margin-left: auto;
}

/* ribbon */
.ribbon {
  display: flex;
  background: #e8e8e8;
  border-bottom: 1px solid #cfcfcf;
  padding-top: 5px;
  min-width: 0;
}

.group {
  position: relative;
  display: flex;
  gap: 13px;
  height: 77px;
  padding: 0 13px;
  border-right: 1px solid #d0d0d0;
}

.group.last {
  border: none;
}

.corner {
  position: absolute;
  right: 5px;
  bottom: 3px;
  width: 6px;
  height: 6px;
  border-right: 1px solid #888;
  border-bottom: 1px solid #888;
}

.big {
  flex-direction: column;
  justify-content: flex-start;
  padding-top: 7px;
  gap: 5px;
  line-height: 22px;
}

.big span {
  display: flex;
  align-items: center;
  gap: 4px;
}

.s30 {
  margin: -1px 0;
}

.rows {
  display: flex;
  flex-direction: column;
  gap: 12px;
  padding-top: 8px;
}

.rows button {
  gap: 4px;
  height: 20px;
}

.clipboard {
  padding-left: 16px;
}

.font, .para {
  flex-direction: column;
  gap: 3px;
}

.font {
  width: 405px;
  padding: 3px 8px 0 7px;
}

.para {
  width: 325px;
  padding: 3px 11px 0 13px;
}

.row {
  display: flex;
  align-items: center;
  height: 29px;
  gap: 12px;
}

.font .row.bottom {
  padding-left: 4px;
}

.row button {
  gap: 3px;
}

.row.top {
  gap: 14px;
}

.row.spread {
  justify-content: space-between;
  gap: 0;
}

.row button.on {
  height: 30px;
  background: #bcbcbc;
  border-radius: 5px;
  box-shadow: -5px 0 0 #bcbcbc, 5px 0 0 #bcbcbc;
}

.combos {
  display: flex;
  width: 244px;
  height: 29px;
  margin-right: -5px;
  border: 1px solid #a8a8a8;
  border-radius: 4px;
  background: #efefef;
}

.combo {
  display: flex;
  align-items: center;
  padding-right: 4px;
}

.combo.name {
  flex: 3;
  border-right: 1px solid #a8a8a8;
}

.combo.size {
  flex: 2;
}

.combo select {
  flex: 1;
  min-width: 0;
  padding-left: 7px;
  appearance: none;
}

.combo.size select {
  padding-left: 4px;
}

.styles {
  padding: 0 14px 0 8px;
  gap: 13px;
}

.gallery {
  display: flex;
  width: 344px;
  height: 62px;
  margin-top: 3px;
  border: 1px solid #b8b8b8;
  border-radius: 4px;
  background: #eeeeee;
}

.style {
  flex: 1;
  min-width: 0;
  flex-direction: column;
  justify-content: flex-end;
  align-items: center;
  overflow: hidden;
  line-height: 22px;
}

.style.current {
  border: 2px solid #b4b4b4;
  border-radius: 3px;
}

.sample {
  align-self: stretch;
  padding-left: 2px;
  overflow: hidden;
  color: #1e1e1e;
  font-family: "Liberation Serif", serif;
  font-size: 18px;
  line-height: 32px;
  text-align: left;
}

.sample.head {
  color: black;
  font-size: 23px;
  font-weight: 700;
}

.scroller {
  display: flex;
  flex-direction: column;
  width: 16px;
  border-left: 1px solid #c4c4c4;
}

.scroller button {
  flex: 1;
}

.scroller button + button {
  border-top: 1px solid #c4c4c4;
}

.bar {
  box-shadow: 0 -4px 0 -1px #eeeeee, 0 -5px 0 -1px #707070;
}

/* workspace */
.workspace {
  display: flex;
  min-height: 0;
  min-width: 0;
  background: #e1e1e1;
}

.rail {
  display: flex;
  flex-direction: column;
  align-items: center;
  background: #d6d6d6;
}

.rail .off svg {
  stroke: #c0c0c0;
}

.rail.left {
  width: 45px;
  gap: 15px;
  padding-top: 7px;
  padding-right: 3px;
}

.rail.left button {
  width: 30px;
  height: 30px;
}

.rail.left .on {
  background: #b0b0b0;
  border-radius: 5px;
}

.rail.right {
  width: 47px;
  gap: 25px;
  padding-top: 14px;
}

.grip {
  width: 20px;
  height: 5px;
  border: solid #b4b4b4;
  border-width: 1px 0;
}

.rail hr {
  width: 38px;
  border: none;
  border-top: 1px solid #c4c4c4;
  margin-bottom: -4px;
}

.outline {
  display: flex;
  flex-direction: column;
  width: 399px;
  padding: 12px 12px 12px 11px;
  background: #f4f4f4;
}

.outline-head {
  display: flex;
  align-items: center;
  justify-content: space-between;
  padding: 0 10px 0 14px;
  height: 30px;
}

.outline-head h2 {
  font-size: 24px;
  font-weight: 400;
}

.outline-head svg {
  stroke: #888;
}

.outline-tools {
  display: flex;
  align-items: center;
  gap: 14px;
  height: 22px;
  margin: 9px 4px 13px 6px;
}

.outline-tools svg {
  stroke: #8a8a8a;
}

.smart {
  gap: 6px;
  margin-left: auto;
}

.outline-tools .smart svg {
  width: 18px;
  height: 16px;
  fill: #3f8ff0;
  stroke: white;
}

.outline-tools .smart ellipse {
  stroke: none;
}

.tree {
  flex: 1;
  display: flex;
  min-height: 0;
  padding: 4px 9px 21px 0;
  border: 1px solid #dedede;
  border-radius: 4px;
}

.tree ul {
  flex: 1;
  display: flex;
  flex-direction: column;
  padding-left: 76px;
  list-style: none;
  color: #403c3a;
}

.tree li {
  flex: 1;
  display: flex;
  align-items: center;
  gap: 6px;
  margin-left: 13px;
  line-height: 20px;
  white-space: nowrap;
}

.tree li svg {
  width: 12px;
  height: 12px;
  margin-left: -13px;
  stroke-width: 2;
}

.tree li.leaf {
  padding-left: 5px;
}

.tree li.sub {
  padding-left: 26px;
}

.tree li.here {
  background: #c5d8f4;
}

.tree-scroll {
  width: 13px;
  display: flex;
  flex-direction: column;
  justify-content: flex-end;
  padding: 0 0 3px 1px;
}

.tree-scroll i {
  height: 50%;
  border-radius: 6px;
  background: #b0b2b4;
}

/* rulers */
.vruler {
  display: flex;
  flex-direction: column;
  width: 33px;
  padding: 12px 10px 96px 3px;
  background: #d9d9d9;
  font-size: 12px;
}

.vruler svg {
  margin: 0 0 5px 2px;
  stroke-width: 2;
}

.vruler-scale {
  flex: 1;
  display: flex;
  flex-direction: column;
  padding: 6px 0 4px;
  background: #b9b9b9;
  border-top: 1px solid #666;
  transform: rotate(180deg);
}

.vruler-scale span {
  flex: 1;
  width: 20px;
  line-height: 20px;
  text-align: center;
  writing-mode: vertical-rl;
}

.editor {
  flex: 1;
  display: flex;
  flex-direction: column;
  min-width: 0;
}

.hruler {
  display: flex;
  justify-content: center;
  height: 31px;
  background: #d9d9d9;
}

.hruler-scale {
  position: relative;
  display: flex;
  width: 997px;
  height: 20px;
  padding: 0 19px 0 25px;
  background: linear-gradient(90deg, transparent 150px, #b9b9b9 150px, #b9b9b9 847px, transparent 847px);
  font-size: 12px;
  line-height: 18px;
}

.hruler-scale span {
  flex: 1;
  text-align: center;
}

.stop {
  position: absolute;
  top: 0;
  width: 12px;
  height: 28px;
  fill: white;
  stroke: #808080;
}

.stop.hang { left: 144px; }
.stop.first { left: 179px; }
.stop.end { left: 841px; }

/* document */
.canvas {
  flex: 1;
  display: flex;
  flex-direction: column;
  align-items: center;
  justify-content: flex-end;
  min-height: 0;
  overflow: hidden;
}

.page {
  position: relative;
  flex: 1 0 auto;
  display: flex;
  flex-direction: column;
  justify-content: flex-end;
  width: 997px;
  padding: 0 148px 60px 150px;
  background: white;
  box-shadow: 0 -4px 18px rgba(0, 0, 0, 0.32);
  color: #101010;
}

.page.next {
  flex: none;
  height: 93px;
  padding: 0;
  border-top: 1px solid #b4b4b4;
  box-shadow: 0 8px 18px rgba(0, 0, 0, 0.32);
}

.crop {
  position: absolute;
  top: -8px;
  width: 31px;
  height: 15px;
  border: 1px solid #b4b4b4;
}

.crop.l {
  left: 120px;
  border-left: none;
}

.crop.r {
  right: 120px;
  border-right: none;
}

.page p {
  text-indent: 35px;
  font-family: "Liberation Serif", "Noto Sans CJK SC", serif;
  font-size: 17px;
  line-height: 25px;
  text-align: justify;
}

.page p.deep {
  text-indent: 87px;
}

.page code {
  color: #1a1a78;
  font-family: "Liberation Mono", monospace;
  font-size: 17px;
  line-height: 17px;
}

.page h3 {
  margin: 39px 3px 12px 120px;
  color: black;
  font-family: "Liberation Serif", "Noto Sans CJK SC", serif;
  font-size: 23px;
  font-weight: 500;
  line-height: 52px;
  text-align: justify;
  text-indent: -48px;
}

.page p.typing {
  position: relative;
}

.cursor {
  position: relative;
  display: inline-block;
  width: 2px;
  height: 20px;
  background: black;
  text-indent: 0;
  vertical-align: -4px;
}

.paste-tip, .para-tip {
  position: absolute;
  gap: 7px;
}

.paste-tip {
  top: 25px;
  left: 3px;
}

.para-tip {
  top: 1px;
  left: -84px;
  gap: 9px;
}

.para-tip svg {
  width: 16px;
  height: 20px;
  stroke: white;
}

.para-tip .tip-bg {
  fill: #b9cce8;
  stroke: none;
}

.ibeam {
  position: absolute;
  left: 369px;
  bottom: 104px;
  width: 10px;
  height: 20px;
}

/* scrollbar */
.vscroll {
  display: flex;
  flex-direction: column;
  align-items: center;
  width: 17px;
  padding: 5px 0 11px;
  gap: 14px;
  background: #cfcfcf;
}

.ruler-toggle {
  width: 12px;
  height: 15px;
}

.ruler-toggle .box { fill: #7a7a7a; stroke: none; }
.ruler-toggle .tri { fill: white; stroke: none; }

.thumb {
  width: 17px;
  height: 45px;
  margin-top: auto;
  margin-bottom: 64px;
  border: 1px solid #8c8c8c;
  border-radius: 8px;
  background: #ececec;
}

.vscroll span {
  display: flex;
  flex-direction: column;
}

.ring {
  width: 7px;
  height: 8px;
  border: 1px solid #707070;
  border-radius: 2px;
}

/* status bar */
.status {
  display: flex;
  align-items: center;
  padding-top: 1px;
  border-top: 1px solid #cdcdcd;
  background: #e8e8e8;
  color: #606060;
  white-space: nowrap;
  min-width: 0;
}

.status > span, .status > button {
  display: flex;
  align-items: center;
  gap: 5px;
  height: 26px;
  padding: 0 9px 0 11px;
  border-right: 1px solid #d2d2d2;
}

.status em {
  margin-left: 14px;
  font-style: normal;
}

.status > .wide {
  padding: 0 20px 0 18px;
}

.status > button.wide {
  border: none;
}

.shield {
  width: 16px;
  height: 20px;
}

.status svg {
  stroke: #606060;
}

.views {
  display: flex;
  gap: 12px;
  height: 28px;
  margin-left: auto;
  padding-right: 17px;
  border-right: 1px solid #d2d2d2;
}

.views .on {
  background: #b8b8b8;
  box-shadow: -5px 0 0 #b8b8b8, 5px 0 0 #b8b8b8;
}

.zoom {
  display: flex;
  gap: 14px;
  padding: 0 269px 0 14px;
}

.zoom button {
  gap: 6px;
}

/* input method */
.ime {
  position: absolute;
  right: 0;
  bottom: 0;
  display: flex;
  align-items: center;
  gap: 9px;
  height: 27px;
  padding: 2px 6px 0 0;
  background: white;
  border-top: 1px solid #c8d4e4;
}

.ime svg {
  width: 18px;
  height: 20px;
  stroke: #1f6fc4;
  stroke-width: 2;
}

.ime .w22 {
  width: 22px;
}

.ime .solid {
  fill: #1f6fc4;
  stroke: none;
}

.ime .pale .solid {
  fill: #b4c4d8;
}

.ime .keys {
  stroke: white;
}

.ime .ime-logo {
  width: 37px;
  height: 32px;
  margin: -7px -4px 0 0;
}

.ime .ime-logo .o { fill: #f26522; stroke: none; }
.ime .ime-logo .s { stroke: white; stroke-width: 5; }

.zh {
  color: #1f6fc4;
  font-size: 18px;
  font-weight: 700;
}

.watermark {
  position: absolute;
  right: 12px;
  top: -9px;
  color: rgba(255, 255, 255, 0.8);
  font-size: 13px;
  font-style: italic;
  font-weight: 700;
  line-height: 16px;
  text-shadow: 0 0 1px #b4b4b4;
}
```
